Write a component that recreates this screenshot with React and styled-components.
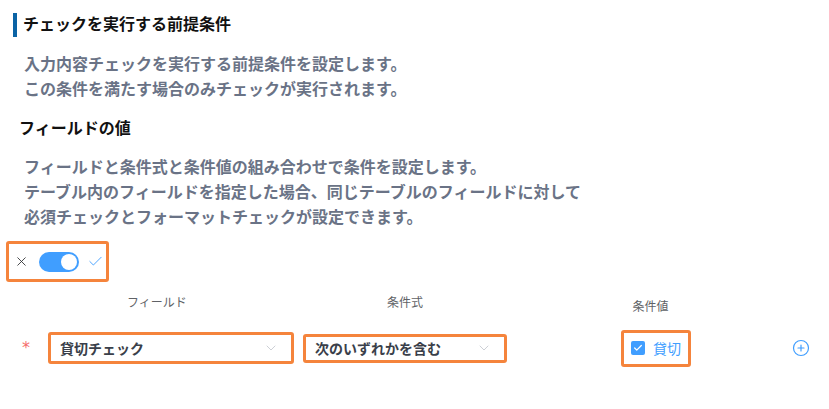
import React from "react";
import styled, { createGlobalStyle } from "styled-components";
import { Check, X, ChevronDown, CirclePlus } from "lucide-react";

const GlobalStyle = createGlobalStyle`
  body {
    margin: 0;
    background: #fff;
    font-family: "Noto Sans CJK JP", "Noto Sans", sans-serif;
  }
`;

const Page = styled.div`
  width: 829px;
  height: 409px;
  padding-top: 13px;
  box-sizing: border-box;
  overflow: hidden;
`;

const SectionTitle = styled.h2`
  margin: 0 0 0 13px;
  height: 24px;
  line-height: 21px;
  box-sizing: border-box;
  padding: 0 0 3px 6px;
  border-left: 4px solid #0b63a5;
  font-size: 16px;
  font-weight: 700;
  color: #111;
`;

const Description = styled.p`
  margin: ${(p) => p.$top}px 0 0;
  padding-left: 24px;
  font-size: 16px;
  line-height: 25px;
  font-weight: 700;
  color: #6a7386;
`;

const SubTitle = styled.h3`
  margin: 14px 0 0;
  padding-left: 19px;
  height: 24px;
  line-height: 24px;
  font-size: 16px;
  font-weight: 700;
  color: #111;
`;

const Highlight = styled.div`
  box-sizing: border-box;
  display: flex;
  align-items: center;
  border: 3px solid #f5843c;
  border-radius: 3px;
  background: #fff;
  width: ${(p) => p.$w}px;
  height: ${(p) => p.$h}px;
`;

const ToggleBox = styled(Highlight)`
  margin: 12px 0 0 6px;
  padding-left: 5px;
  color: #303133;
`;

const SwitchTrack = styled.span`
  position: relative;
  margin: 0 8px 0 10px;
  width: 40px;
  height: 20px;
  border-radius: 10px;
  background: #409eff;
`;

const SwitchKnob = styled.span`
  position: absolute;
  top: 2px;
  right: 2px;
  width: 16px;
  height: 16px;
  border-radius: 50%;
  background: #fff;
`;

const LabelRow = styled.div`
  display: flex;
  margin-top: 10px;
  padding-left: 20px;
`;

const ColLabel = styled.div`
  width: ${(p) => p.$w}px;
  margin-left: ${(p) => p.$ml || 0}px;
  padding-top: ${(p) => p.$down || 0}px;
  text-align: center;
  font-size: 12px;
  line-height: 20px;
  color: #606266;
`;

const ConditionRow = styled.div`
  display: flex;
  align-items: center;
  height: 40px;
  margin-top: 12px;
  padding-left: 20px;
`;

const Required = styled.span`
  width: 28px;
  padding-left: 2px;
  box-sizing: border-box;
  color: #f56c6c;
  font-size: 16px;
  line-height: 16px;
  font-family: "DejaVu Sans", sans-serif;
`;

const Select = styled(Highlight)`
  margin-left: ${(p) => p.$ml || 0}px;
  padding: 0 12px 0 9px;
  justify-content: space-between;
  font-size: 14px;
  font-weight: 700;
  color: #3a3f4a;
`;

const ValueCell = styled.div`
  width: 221px;
  margin-left: 33px;
  display: flex;
`;

const CheckGroup = styled(Highlight)`
  margin-left: 81px;
  padding-left: 7px;
  font-size: 14px;
  color: #409eff;
`;

const CheckboxBox = styled.span`
  display: flex;
  align-items: center;
  justify-content: center;
  width: 14px;
  height: 14px;
  margin-right: 8px;
  border-radius: 2px;
  background: #409eff;
  color: #fff;
`;

const AddButton = styled.span`
  display: flex;
  margin-left: 31px;
  color: #409eff;
`;

export default function App() {
  return (
    <>
      <GlobalStyle />
      <Page>
        <SectionTitle>チェックを実行する前提条件</SectionTitle>
        <Description $top={14}>
          入力内容チェックを実行する前提条件を設定します。
          <br />
          この条件を満たす場合のみチェックが実行されます。
        </Description>
        <SubTitle>フィールドの値</SubTitle>
        <Description $top={15}>
          フィールドと条件式と条件値の組み合わせで条件を設定します。
          <br />
          テーブル内のフィールドを指定した場合、同じテーブルのフィールドに対して
          <br />
          必須チェックとフォーマットチェックが設定できます。
        </Description>

        <ToggleBox $w={103} $h={41}>
          <X size={15} strokeWidth={1.4} />
          <SwitchTrack>
            <SwitchKnob />
          </SwitchTrack>
          <Check size={17} strokeWidth={1.3} color="#409eff" />
        </ToggleBox>

        <LabelRow>
          <ColLabel $w={274}>フィールド</ColLabel>
          <ColLabel $w={204} $ml={9}>条件式</ColLabel>
          <ColLabel $w={221} $ml={33} $down={4}>条件値</ColLabel>
        </LabelRow>

        <ConditionRow>
          <Required>*</Required>
          <Select $w={246} $h={32}>
            貸切チェック
            <ChevronDown size={16} strokeWidth={1.2} color="#c0c4cc" />
          </Select>
          <Select $w={204} $h={29} $ml={9}>
            次のいずれかを含む
            <ChevronDown size={16} strokeWidth={1.2} color="#c0c4cc" />
          </Select>
          <ValueCell>
            <CheckGroup $w={70} $h={37}>
              <CheckboxBox>
                <Check size={10} strokeWidth={3} />
              </CheckboxBox>
              貸切
            </CheckGroup>
          </ValueCell>
          <AddButton>
            <CirclePlus size={18} strokeWidth={1.6} />
          </AddButton>
        </ConditionRow>
      </Page>
    </>
  );
}
